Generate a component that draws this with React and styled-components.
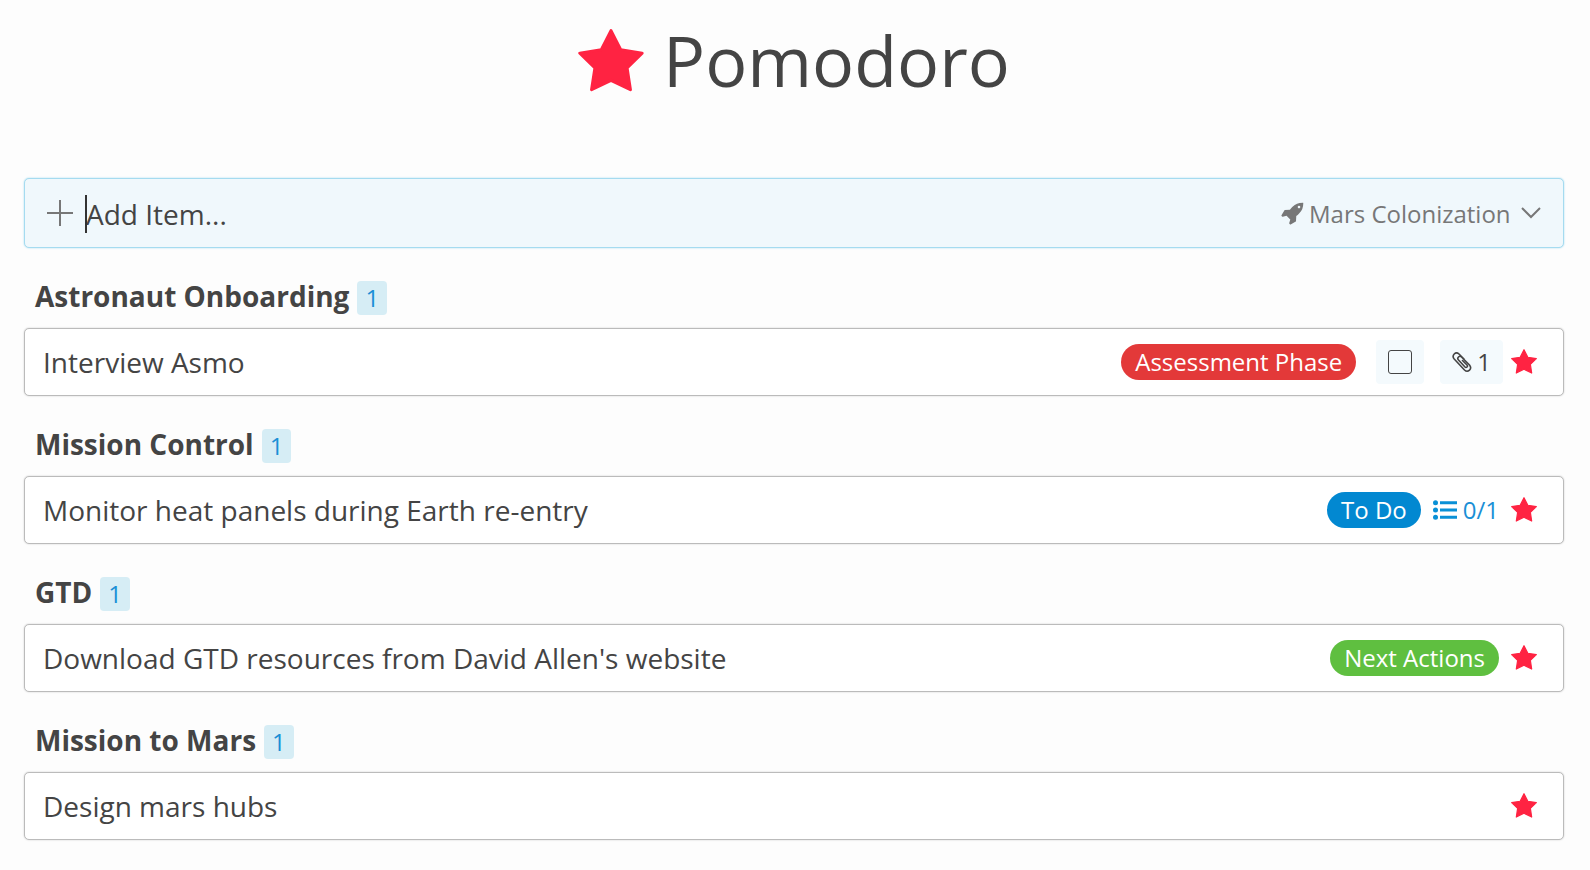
import React from 'react'
import styled, { createGlobalStyle } from 'styled-components'

const groups = [
  {
    name: 'Astronaut Onboarding',
    items: [{ title: 'Interview Asmo', tag: 'Assessment Phase', color: '#e33939', checkbox: true, files: 1 }],
  },
  {
    name: 'Mission Control',
    items: [{ title: 'Monitor heat panels during Earth re-entry', tag: 'To Do', color: '#0288d1', progress: '0/1' }],
  },
  {
    name: 'GTD',
    items: [{ title: "Download GTD resources from David Allen's website", tag: 'Next Actions', color: '#5fbf40' }],
  },
  {
    name: 'Mission to Mars',
    items: [{ title: 'Design mars hubs' }],
  },
]

const StarIcon = ({ width, height }) => (
  <svg width={width} height={height} viewBox='0 0 196 188' aria-hidden='true'>
    <path
      d='M98 5L127 62L191 72L146 116L156 181L98 153L40 181L50 116L5 72L69 62Z'
      fill='#ff2342'
      stroke='#ff2342'
      strokeWidth='9'
      strokeLinejoin='round'
    />
  </svg>
)

const PlusIcon = () => (
  <svg width='26' height='26' viewBox='0 0 26 26' aria-hidden='true'>
    <path d='M13 0V26M0 13H26' stroke='#777' strokeWidth='2' />
  </svg>
)

const RocketIcon = () => (
  <svg width='24' height='24' viewBox='0 0 1792 1792' fill='#777' aria-hidden='true'>
    <path d='M1440 448q0-40-28-68t-68-28-68 28-28 68 28 68 68 28 68-28 28-68zm224-288q0 249-75.5 430.5t-253.5 360.5q-81 80-195 176l-20 379q-2 16-16 26l-384 224q-7 4-16 4-12 0-23-9l-64-64q-13-14-8-32l85-276-281-281-276 85q-3 1-9 1-14 0-23-9l-64-64q-17-19-5-39l224-384q10-14 26-16l379-20q96-114 176-195 188-187 358-258t431-71q14 0 24 9.5t10 22.5z' />
  </svg>
)

const ChevronIcon = () => (
  <svg width='20' height='12' viewBox='0 0 20 12' aria-hidden='true'>
    <path d='M1 1L10 10L19 1' fill='none' stroke='#777' strokeWidth='2' />
  </svg>
)

const ClipIcon = () => (
  <svg width='20' height='22' viewBox='0 0 20 22' fill='none' stroke='#444' aria-hidden='true'>
    <path
      d='M12 8L7 3Q4.500 .8 2.200 3Q0 5.300 2.200 8L12.500 19Q15 21.400 17.500 19.200Q19.800 17 17.500 14L9.500 6Q8 4.500 6.500 6Q5 7.500 6.500 9L13 16Q14 17 15 16Q16 15 15 14L10.500 9.500'
      strokeWidth='1.600'
      strokeLinecap='round'
      strokeLinejoin='round'
    />
  </svg>
)

const ListIcon = () => (
  <svg width='24' height='20' viewBox='0 0 24 20' fill='#0990d6' aria-hidden='true'>
    <circle cx='2.5' cy='2.7' r='2.5' />
    <circle cx='2.5' cy='10' r='2.5' />
    <circle cx='2.5' cy='17.3' r='2.5' />
    <path d='M7 1.2H24V4.2H7ZM7 8.5H24V11.5H7ZM7 15.8H24V18.8H7Z' />
  </svg>
)

const Item = ({ item }) => (
  <ItemRow>
    <ItemTitle>{item.title}</ItemTitle>
    <ItemMeta>
      {item.tag && <Tag $color={item.color}>{item.tag}</Tag>}
      {item.checkbox && (
        <CheckLabel>
          <input type='checkbox' aria-label={`Complete ${item.title}`} />
        </CheckLabel>
      )}
      {item.files && (
        <Files>
          <ClipIcon />
          {item.files}
        </Files>
      )}
      {item.progress && (
        <Progress>
          <ListIcon />
          {item.progress}
        </Progress>
      )}
      <StarButton type='button' aria-label='Unstar item'>
        <StarIcon width={26} height={25} />
      </StarButton>
    </ItemMeta>
  </ItemRow>
)

const App = () => (
  <Page>
    <GlobalStyle />
    <Title>
      <StarIcon width={66} height={63} />
      Pomodoro
    </Title>
    <AddBar>
      <PlusIcon />
      <AddField>
        <input type='text' placeholder='Add Item...' aria-label='Add Item' />
      </AddField>
      <Project>
        <RocketIcon />
        <select aria-label='Project'>
          <option>Mars Colonization</option>
        </select>
        <ChevronIcon />
      </Project>
    </AddBar>
    {groups.map(group => (
      <section key={group.name}>
        <GroupHeading>
          <h2>{group.name}</h2>
          <Count>{group.items.length}</Count>
        </GroupHeading>
        <ItemList>
          {group.items.map(item => (
            <Item key={item.title} item={item} />
          ))}
        </ItemList>
      </section>
    ))}
  </Page>
)

const GlobalStyle = createGlobalStyle`
  * {
    box-sizing: border-box;
  }

  body {
    margin: 0;
    background: #fdfdfd;
    color: #444;
    font-family: 'Open Sans', sans-serif;
    font-size: 28px;
  }

  svg {
    display: block;
    flex: none;
  }

  input, select, button {
    font: inherit;
    color: inherit;
  }
`;

const Page = styled.main`
  padding: 10px 26px 28px 24px;
`;

const Title = styled.h1`
  display: flex;
  align-items: center;
  justify-content: center;
  gap: 19px;
  margin: 0 0 68px;
  font-size: 70px;
  line-height: 100px;
  font-weight: 400;
`;

const AddBar = styled.div`
  display: flex;
  align-items: center;
  gap: 12px;
  height: 70px;
  padding: 0 22px;
  border: 1px solid #a5dbf0;
  border-radius: 5px;
  background: #f0f8fc;
  box-shadow: 0 0 2px #a5dbf0;
`;

const AddField = styled.div`
  position: relative;
  flex: 1;
  padding-top: 2px;

  input {
    display: block;
    width: 100%;
    height: 38px;
    padding: 0 0 0 1px;
    border: 0;
    outline: 0;
    background: none;
  }

  input::placeholder {
    color: #444;
    opacity: 1;
  }

  /* text cursor */
  &::before {
    content: '';
    position: absolute;
    top: 2px;
    left: 0;
    width: 2px;
    height: 38px;
    background: #333;
  }
`;

const Project = styled.label`
  display: flex;
  align-items: center;
  gap: 4px;
  color: #777;
  font-size: 24px;

  select {
    appearance: none;
    margin: 0 6px 0 0;
    padding: 0;
    border: 0;
    outline: 0;
    background: none;
  }
`;

const GroupHeading = styled.div`
  display: flex;
  align-items: center;
  gap: 8px;
  height: 80px;
  padding: 20px 11px 0;

  h2 {
    margin: 0;
    padding-bottom: 4px;
    font-size: 28px;
    line-height: 38px;
    font-weight: 700;
  }
`;

const Count = styled.span`
  padding: 0 8px;
  border-radius: 4px;
  background: #d6edf5;
  color: #1a8fd6;
  font-size: 24px;
  line-height: 34px;
`;

const ItemList = styled.ul`
  margin: 0;
  padding: 0;
  list-style: none;
`;

const ItemRow = styled.li`
  display: flex;
  align-items: center;
  justify-content: space-between;
  height: 68px;
  padding: 0 26px 0 18px;
  border: 1px solid #bbb;
  border-radius: 5px;
  background: #fff;
  box-shadow: 0 0 2px rgba(0, 0, 0, 0.2);
`;

const ItemTitle = styled.span`
  line-height: 38px;
`;

const ItemMeta = styled.div`
  display: flex;
  align-items: center;
  font-size: 24px;
  line-height: 36px;
`;

const Tag = styled.span`
  margin-right: 12px;
  padding: 0 14px;
  border-radius: 18px;
  background: ${props => props.$color};
  color: #fff;
`;

const Chip = styled.span`
  display: flex;
  align-items: center;
  height: 44px;
  padding: 0 12px;
  border-radius: 4px;
  background: #f4fafd;
`;

const CheckLabel = styled(Chip).attrs({ as: 'label' })`
  margin: 0 16px 0 8px;

  input {
    appearance: none;
    width: 24px;
    height: 24px;
    margin: 0;
    border: 1px solid #444;
    border-radius: 3px;
  }
`;

const Files = styled(Chip)`
  gap: 5px;
  margin-right: 8px;
`;

const Progress = styled.span`
  display: flex;
  align-items: center;
  gap: 6px;
  margin-right: 12px;
  color: #1a8fd6;
`;

const StarButton = styled.button`
  padding: 0 0 2px;
  border: 0;
  background: none;
`;

export default App
